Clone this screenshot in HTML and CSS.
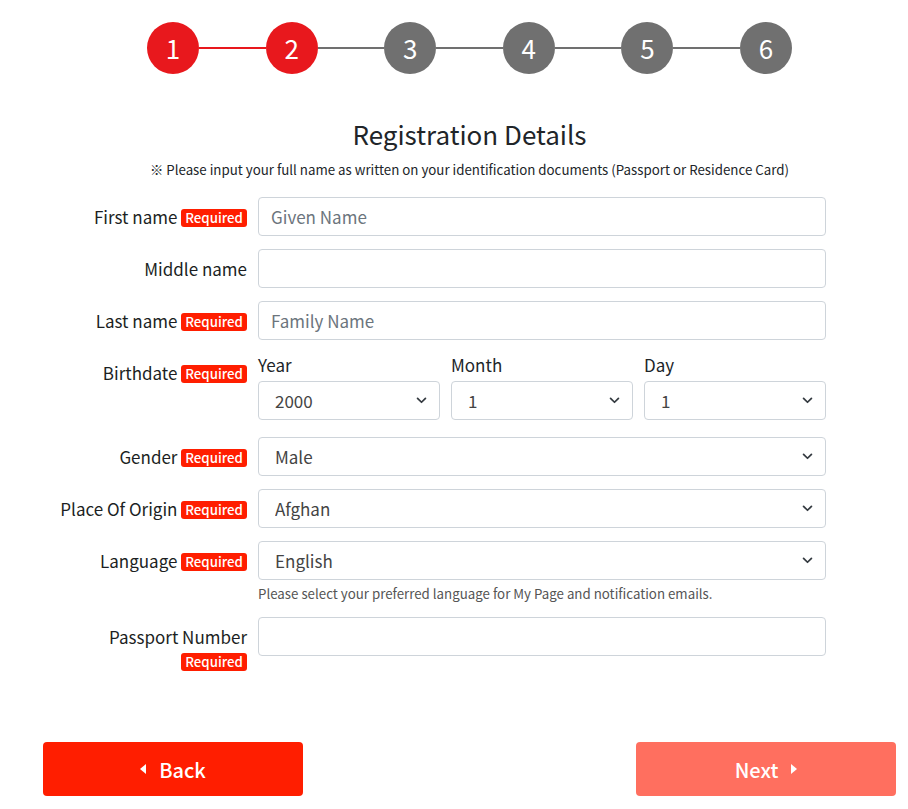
FILE: index.html
```html
<!DOCTYPE html>
<html lang="en">
<head>
  <meta charset="UTF-8">
  <meta name="viewport" content="width=device-width, initial-scale=1.0">
  <title>Registration Details</title>
  <link rel="stylesheet" href="styles.css">
</head>
<body>
  <div class="page">
    <div class="stepper">
      <span class="step done">1</span>
      <span class="bar done"></span>
      <span class="step done">2</span>
      <span class="bar"></span>
      <span class="step">3</span>
      <span class="bar"></span>
      <span class="step">4</span>
      <span class="bar"></span>
      <span class="step">5</span>
      <span class="bar"></span>
      <span class="step">6</span>
    </div>

    <h2 class="title">Registration Details</h2>
    <p class="note">※ Please input your full name as written on your identification documents (Passport or Residence Card)</p>

    <form class="reg-form">
      <div class="row">
        <label class="row-label">First name <span class="req">Required</span></label>
        <input class="field" type="text" placeholder="Given Name">
      </div>

      <div class="row">
        <label class="row-label">Middle name</label>
        <input class="field" type="text">
      </div>

      <div class="row">
        <label class="row-label">Last name <span class="req">Required</span></label>
        <input class="field" type="text" placeholder="Family Name">
      </div>

      <div class="row birth">
        <label class="row-label">Birthdate <span class="req">Required</span></label>
        <div class="date-cols">
          <div class="date-col">
            <div class="sub-label">Year</div>
            <div class="select-wrap">
              <select class="field sel"><option>2000</option></select>
              <svg class="chev" viewBox="0 0 12 8"><path d="M1.5 1.5 6 6 10.5 1.5" fill="none" stroke="#343a40" stroke-width="2" stroke-linecap="round" stroke-linejoin="round"/></svg>
            </div>
          </div>
          <div class="date-col">
            <div class="sub-label">Month</div>
            <div class="select-wrap">
              <select class="field sel"><option>1</option></select>
              <svg class="chev" viewBox="0 0 12 8"><path d="M1.5 1.5 6 6 10.5 1.5" fill="none" stroke="#343a40" stroke-width="2" stroke-linecap="round" stroke-linejoin="round"/></svg>
            </div>
          </div>
          <div class="date-col">
            <div class="sub-label">Day</div>
            <div class="select-wrap">
              <select class="field sel"><option>1</option></select>
              <svg class="chev" viewBox="0 0 12 8"><path d="M1.5 1.5 6 6 10.5 1.5" fill="none" stroke="#343a40" stroke-width="2" stroke-linecap="round" stroke-linejoin="round"/></svg>
            </div>
          </div>
        </div>
      </div>

      <div class="row">
        <label class="row-label">Gender <span class="req">Required</span></label>
        <div class="select-wrap">
          <select class="field sel"><option>Male</option><option>Female</option></select>
          <svg class="chev" viewBox="0 0 12 8"><path d="M1.5 1.5 6 6 10.5 1.5" fill="none" stroke="#343a40" stroke-width="2" stroke-linecap="round" stroke-linejoin="round"/></svg>
        </div>
      </div>

      <div class="row">
        <label class="row-label">Place Of Origin <span class="req">Required</span></label>
        <div class="select-wrap">
          <select class="field sel"><option>Afghan</option></select>
          <svg class="chev" viewBox="0 0 12 8"><path d="M1.5 1.5 6 6 10.5 1.5" fill="none" stroke="#343a40" stroke-width="2" stroke-linecap="round" stroke-linejoin="round"/></svg>
        </div>
      </div>

      <div class="row">
        <label class="row-label">Language <span class="req">Required</span></label>
        <div>
          <div class="select-wrap">
            <select class="field sel"><option>English</option></select>
            <svg class="chev" viewBox="0 0 12 8"><path d="M1.5 1.5 6 6 10.5 1.5" fill="none" stroke="#343a40" stroke-width="2" stroke-linecap="round" stroke-linejoin="round"/></svg>
          </div>
          <div class="help">Please select your preferred language for My Page and notification emails.</div>
        </div>
      </div>

      <div class="row">
        <label class="row-label">Passport Number <span class="req">Required</span></label>
        <input class="field" type="text">
      </div>
    </form>

    <div class="actions">
      <button class="btn back" type="button">
        <svg class="caret" viewBox="0 0 6 10"><path d="M6 0 0 5 6 10Z" fill="#fff"/></svg>
        Back
      </button>
      <button class="btn next" type="button">
        Next
        <svg class="caret" viewBox="0 0 6 10"><path d="M0 0 6 5 0 10Z" fill="#fff"/></svg>
      </button>
    </div>
  </div>
</body>
</html>
```

FILE: styles.css
```css
body {
  margin: 0;
  font-family: "Noto Sans CJK JP", "Noto Sans", sans-serif;
  color: #212529;
  background: #fff;
}
.page {
  width: 853px;
  margin-left: 43px;
  padding-top: 22px;
}
.stepper {
  width: 645px;
  margin: 0 auto;
  display: flex;
  align-items: center;
}
.step {
  width: 52px;
  height: 52px;
  border-radius: 50%;
  background: #707070;
  color: #fff;
  font-size: 26px;
  line-height: 52px;
  text-align: center;
  flex: none;
}
.step.done {
  background: #e8181d;
}
.bar {
  flex: 1;
  height: 2px;
  background: #707070;
}
.bar.done {
  background: #e8181d;
}
.title {
  margin: 42px 0 0;
  font-size: 26px;
  font-weight: 400;
  line-height: 36px;
  text-align: center;
}
.note {
  margin: 8px 0 0;
  font-size: 13.3px;
  line-height: 20px;
  text-align: center;
}
.reg-form {
  margin-top: 17px;
  display: flex;
  flex-direction: column;
  gap: 13px;
}
.row {
  display: grid;
  grid-template-columns: 204px 568px;
  column-gap: 11px;
  align-items: start;
}
.row-label {
  text-align: right;
  font-size: 17px;
  line-height: 24px;
  padding-top: 8px;
  color: #1c1f23;
}
.req {
  display: inline-block;
  background: #ff1e00;
  color: #fff;
  font-size: 13.3px;
  font-weight: 500;
  line-height: 18px;
  padding: 0 4px;
  border-radius: 3px;
  vertical-align: 1px;
}
.field {
  box-sizing: border-box;
  width: 100%;
  height: 39px;
  border: 1px solid #ced4da;
  border-radius: 4px;
  padding: 0 12px;
  font-family: inherit;
  font-size: 17px;
  color: #444;
  background: #fff;
}
.field::placeholder {
  color: #6c757d;
}
.sel {
  appearance: none;
  padding-left: 16px;
  padding-right: 36px;
}
.select-wrap {
  position: relative;
}
.chev {
  position: absolute;
  right: 13px;
  top: 16px;
  width: 11px;
  height: 7px;
  pointer-events: none;
}
.birth {
  margin-bottom: 4px;
}
.date-cols {
  display: grid;
  grid-template-columns: repeat(3, 1fr);
  column-gap: 11px;
}
.sub-label {
  font-size: 17px;
  line-height: 24px;
  margin-bottom: 4px;
}
.help {
  margin-top: 4px;
  font-size: 13.3px;
  line-height: 20px;
  color: #555;
}
.actions {
  margin-top: 69px;
  display: flex;
  justify-content: space-between;
}
.btn {
  width: 260px;
  height: 54px;
  border: none;
  border-radius: 4px;
  color: #fff;
  font-family: inherit;
  font-size: 20px;
  font-weight: 500;
  display: flex;
  align-items: center;
  justify-content: center;
  gap: 13px;
}
.back {
  background: #ff1e00;
}
.next {
  background: #ff6f5f;
}
.caret {
  width: 6px;
  height: 10px;
}
```
